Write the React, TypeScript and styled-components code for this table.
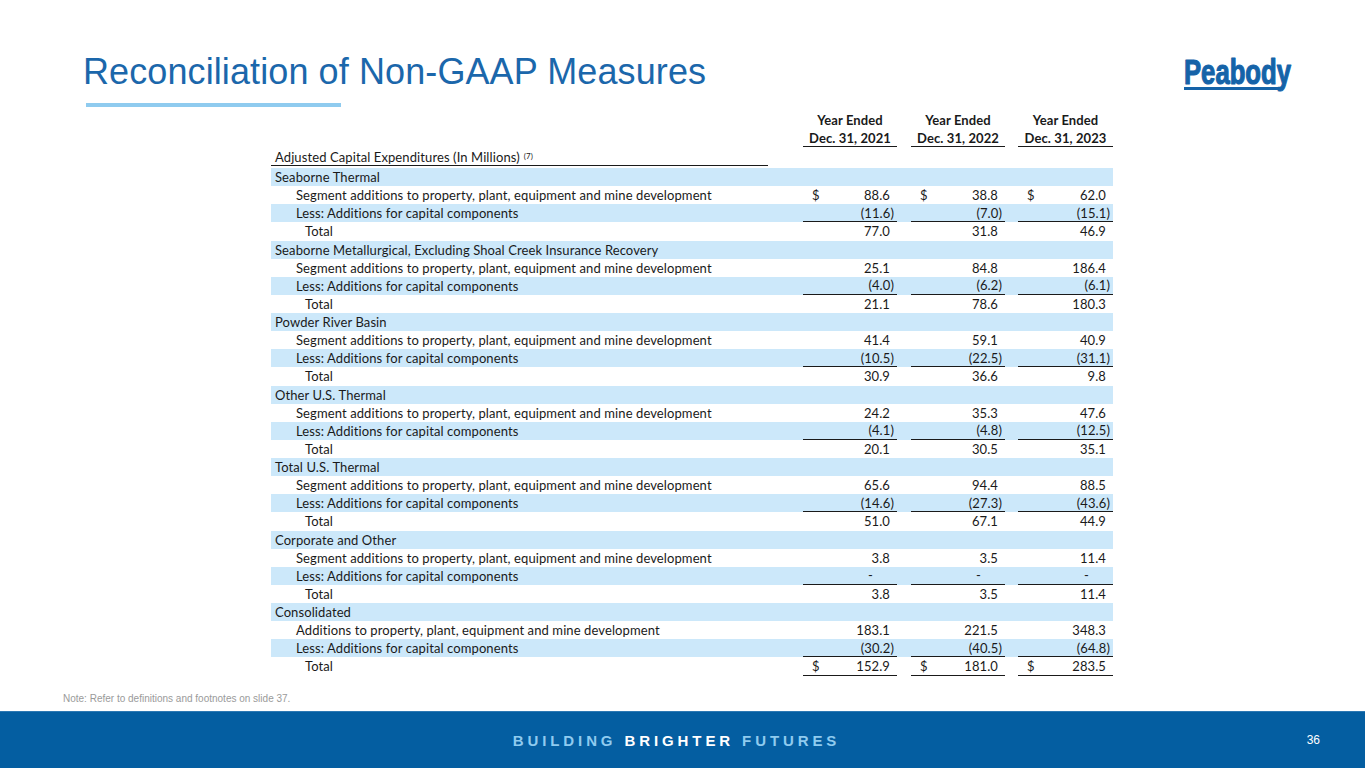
import React from 'react';
import styled, { createGlobalStyle } from 'styled-components';

const GlobalStyle = createGlobalStyle`
  html, body {
    margin: 0;
    padding: 0;
    background: #ffffff;
  }
`;

const Page = styled.div`
  width: 1365px;
  height: 768px;
  display: flex;
  flex-direction: column;
  background: #ffffff;
  overflow: hidden;
`;

const Header = styled.header`
  display: flex;
  justify-content: space-between;
  align-items: flex-start;
  height: 110px;
  padding: 52px 72px 0 83px;
  box-sizing: border-box;
`;

const TitleBlock = styled.div`
  display: flex;
  flex-direction: column;
`;

const Title = styled.h1`
  margin: 0;
  font-family: 'Liberation Sans', Arial, sans-serif;
  font-weight: 400;
  font-size: 36px;
  line-height: 40px;
  letter-spacing: 0.1px;
  color: #1b67ab;
`;

const TitleBar = styled.div`
  width: 255px;
  height: 4px;
  margin: 11px 0 0 3px;
  background: #8fcbef;
`;

const LogoMark = styled.svg`
  margin-top: 2px;
  display: block;
  overflow: visible;
`;

const Table = styled.div`
  width: 842px;
  margin-left: 271px;
  font-family: Lato, 'Open Sans', sans-serif;
  font-size: 13px;
  letter-spacing: 0.1px;
  color: #1a1a1a;
`;

const Row = styled.div<{ $band?: boolean; $height?: number }>`
  display: grid;
  grid-template-columns: 532px 94px 14px 94px 13px 95px;
  height: ${(p) => p.$height ?? 18.14}px;
  background: ${(p) => (p.$band ? '#cce8fa' : 'transparent')};
  box-sizing: border-box;
`;

const Label = styled.div<{ $indent?: number }>`
  display: flex;
  align-items: center;
  padding-left: ${(p) => p.$indent ?? 4}px;
  white-space: nowrap;
`;

const CapLabel = styled.span`
  display: flex;
  align-items: center;
  width: 497px;
  padding-left: 4px;
  box-sizing: border-box;
  border-bottom: 1px solid #1a1a1a;

  sup {
    font-size: 8px;
    margin-left: 4px;
    align-self: flex-start;
    margin-top: 2px;
  }
`;

const HeadCell = styled.div<{ $rule?: boolean }>`
  display: flex;
  align-items: center;
  justify-content: center;
  font-weight: 700;
  border-bottom: ${(p) => (p.$rule ? '1px solid #1a1a1a' : 'none')};
  box-sizing: border-box;
  white-space: nowrap;
`;

const Value = styled.div<{ $rule?: boolean }>`
  display: flex;
  align-items: center;
  justify-content: space-between;
  padding: 0 3px 0 9px;
  border-bottom: ${(p) => (p.$rule ? '1px solid #1a1a1a' : 'none')};
  box-sizing: border-box;
`;

const Num = styled.span<{ $neg?: boolean; $dash?: boolean }>`
  margin-left: auto;
  padding-right: ${(p) => (p.$dash ? 21 : p.$neg ? 0 : 4)}px;
`;

const Note = styled.div`
  margin: 17px 0 0 63px;
  font-family: 'Liberation Sans', Arial, sans-serif;
  font-size: 10px;
  line-height: 12px;
  color: #9a9a9a;
`;

const Footer = styled.footer`
  margin-top: auto;
  height: 57px;
  background: #045ea1;
  border-top: 1px solid #2c78b3;
  box-sizing: border-box;
  display: grid;
  grid-template-columns: 1fr auto 1fr;
  align-items: center;
  font-family: 'Liberation Sans', Arial, sans-serif;
`;

const Slogan = styled.div`
  grid-column: 2;
  margin-right: 12px;
  font-size: 15px;
  font-weight: 700;
  letter-spacing: 3.9px;
  color: #8fcbef;
  padding-top: 1px;
`;

const Bright = styled.span`
  color: #ffffff;
`;

const PageNum = styled.div`
  grid-column: 3;
  justify-self: end;
  padding-right: 45px;
  font-size: 12px;
  color: #ffffff;
`;

type Section = {
  name: string;
  seg: string;
  segVals: string[];
  less: string[];
  total: string[];
  segDollar?: boolean;
  totalDollar?: boolean;
};

const SEG = 'Segment additions to property, plant, equipment and mine development';

const sections: Section[] = [
  {
    name: 'Seaborne Thermal',
    seg: SEG,
    segVals: ['88.6', '38.8', '62.0'],
    less: ['(11.6)', '(7.0)', '(15.1)'],
    total: ['77.0', '31.8', '46.9'],
    segDollar: true,
  },
  {
    name: 'Seaborne Metallurgical, Excluding Shoal Creek Insurance Recovery',
    seg: SEG,
    segVals: ['25.1', '84.8', '186.4'],
    less: ['(4.0)', '(6.2)', '(6.1)'],
    total: ['21.1', '78.6', '180.3'],
  },
  {
    name: 'Powder River Basin',
    seg: SEG,
    segVals: ['41.4', '59.1', '40.9'],
    less: ['(10.5)', '(22.5)', '(31.1)'],
    total: ['30.9', '36.6', '9.8'],
  },
  {
    name: 'Other U.S. Thermal',
    seg: SEG,
    segVals: ['24.2', '35.3', '47.6'],
    less: ['(4.1)', '(4.8)', '(12.5)'],
    total: ['20.1', '30.5', '35.1'],
  },
  {
    name: 'Total U.S. Thermal',
    seg: SEG,
    segVals: ['65.6', '94.4', '88.5'],
    less: ['(14.6)', '(27.3)', '(43.6)'],
    total: ['51.0', '67.1', '44.9'],
  },
  {
    name: 'Corporate and Other',
    seg: SEG,
    segVals: ['3.8', '3.5', '11.4'],
    less: ['-', '-', '-'],
    total: ['3.8', '3.5', '11.4'],
  },
  {
    name: 'Consolidated',
    seg: 'Additions to property, plant, equipment and mine development',
    segVals: ['183.1', '221.5', '348.3'],
    less: ['(30.2)', '(40.5)', '(64.8)'],
    total: ['152.9', '181.0', '283.5'],
    totalDollar: true,
  },
];

const ValueCells = ({ vals, dollar, rule }: { vals: string[]; dollar?: boolean; rule?: boolean }) => (
  <>
    {vals.map((v, i) => (
      <React.Fragment key={i}>
        {i > 0 && <div />}
        <Value $rule={rule}>
          {dollar && <span>$</span>}
          <Num $neg={v.startsWith('(')} $dash={v === '-'}>
            {v}
          </Num>
        </Value>
      </React.Fragment>
    ))}
  </>
);

const Logo = () => (
  <LogoMark width="110" height="40" viewBox="0 0 110 40">
    <text
      x="1"
      y="30"
      fontFamily="'Liberation Sans', Arial, sans-serif"
      fontWeight="700"
      fontSize="35"
      textLength="107"
      lengthAdjust="spacingAndGlyphs"
      fill="#1563a8"
      stroke="#1563a8"
      strokeWidth="1.2"
      strokeLinejoin="round"
    >
      Peabody
    </text>
    <rect x="1" y="33" width="98" height="3" fill="#1563a8" />
  </LogoMark>
);

const years = ['2021', '2022', '2023'];

const App = () => (
  <Page>
    <GlobalStyle />
    <Header>
      <TitleBlock>
        <Title>Reconciliation of Non-GAAP Measures</Title>
        <TitleBar />
      </TitleBlock>
      <Logo />
    </Header>

    <Table>
      <Row $height={19}>
        <div />
        {years.map((y, i) => (
          <React.Fragment key={y}>
            {i > 0 && <div />}
            <HeadCell>Year Ended</HeadCell>
          </React.Fragment>
        ))}
      </Row>
      <Row $height={18}>
        <div />
        {years.map((y, i) => (
          <React.Fragment key={y}>
            {i > 0 && <div />}
            <HeadCell $rule>Dec. 31, {y}</HeadCell>
          </React.Fragment>
        ))}
      </Row>
      <Row $height={21}>
        <Label $indent={0}>
          <CapLabel>
            Adjusted Capital Expenditures (In Millions)<sup>(7)</sup>
          </CapLabel>
        </Label>
      </Row>

      {sections.map((s) => (
        <React.Fragment key={s.name}>
          <Row $band>
            <Label>{s.name}</Label>
          </Row>
          <Row>
            <Label $indent={25}>{s.seg}</Label>
            <ValueCells vals={s.segVals} dollar={s.segDollar} />
          </Row>
          <Row $band>
            <Label $indent={25}>Less: Additions for capital components</Label>
            <ValueCells vals={s.less} rule />
          </Row>
          <Row>
            <Label $indent={34}>Total</Label>
            <ValueCells vals={s.total} dollar={s.totalDollar} rule={s.totalDollar} />
          </Row>
        </React.Fragment>
      ))}
    </Table>

    <Note>Note: Refer to definitions and footnotes on slide 37.</Note>

    <Footer>
      <Slogan>
        BUILDING <Bright>BRIGHTER</Bright> FUTURES
      </Slogan>
      <PageNum>36</PageNum>
    </Footer>
  </Page>
);

export default App;
